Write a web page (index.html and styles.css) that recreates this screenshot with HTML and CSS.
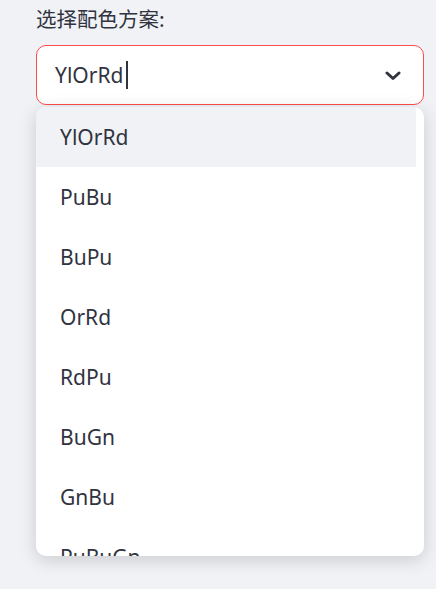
FILE: index.html
```html
<!DOCTYPE html>
<html lang="zh">
<head>
<meta charset="utf-8">
<link rel="stylesheet" href="styles.css">
</head>
<body>
<div class="widget">
  <label class="label">选择配色方案:</label>
  <div class="select">
    <div class="value">YlOrRd<span class="caret"></span></div>
    <svg class="chevron" width="16" height="10" viewBox="0 0 16 10"><path d="M2 2 L8 7.5 L14 2" fill="none" stroke="#31333f" stroke-width="3" stroke-linecap="round" stroke-linejoin="round"/></svg>
  </div>
  <ul class="menu">
    <li class="item active">YlOrRd</li>
    <li class="item">PuBu</li>
    <li class="item">BuPu</li>
    <li class="item">OrRd</li>
    <li class="item">RdPu</li>
    <li class="item">BuGn</li>
    <li class="item">GnBu</li>
    <li class="item">PuBuGn</li>
  </ul>
</div>
</body>
</html>
```
FILE: styles.css
```css
html, body {
  margin: 0;
  padding: 0;
  background: #f0f2f6;
  width: 436px;
  height: 589px;
  overflow: hidden;
  font-family: "Noto Sans", "Noto Sans CJK SC", sans-serif;
  color: #31333f;
}
.widget {
  position: relative;
  margin-left: 36px;
  width: 388px;
}
.label {
  display: block;
  height: 45px;
  padding-top: 4px;
  box-sizing: border-box;
  font-size: 20.5px;
  line-height: 28px;
  font-family: "Noto Sans CJK SC", "Noto Sans", sans-serif;
}
.select {
  height: 60px;
  box-sizing: border-box;
  border: 1px solid #ff4b4b;
  border-radius: 10px;
  background: #fff;
  display: flex;
  align-items: center;
  justify-content: space-between;
  padding: 0 22px 0 18px;
}
.value {
  font-size: 21px;
  display: flex;
  align-items: center;
}
.caret {
  display: inline-block;
  width: 1.5px;
  height: 28px;
  background: #31333f;
  margin-left: 3px;
}
.chevron { display: block; margin-top: 2px; }
.menu {
  position: absolute;
  left: 0;
  top: 107px;
  width: 388px;
  height: 449px;
  margin: 0;
  padding: 0 8px 0 0;
  box-sizing: border-box;
  list-style: none;
  background: #fff;
  border-radius: 10px;
  overflow: hidden;
  box-shadow: 0 4px 18px rgba(0,0,0,0.16);
}
.item {
  height: 60px;
  display: flex;
  align-items: center;
  padding-left: 24px;
  font-size: 21px;
}
.item.active { background: #f0f2f6; }
```
